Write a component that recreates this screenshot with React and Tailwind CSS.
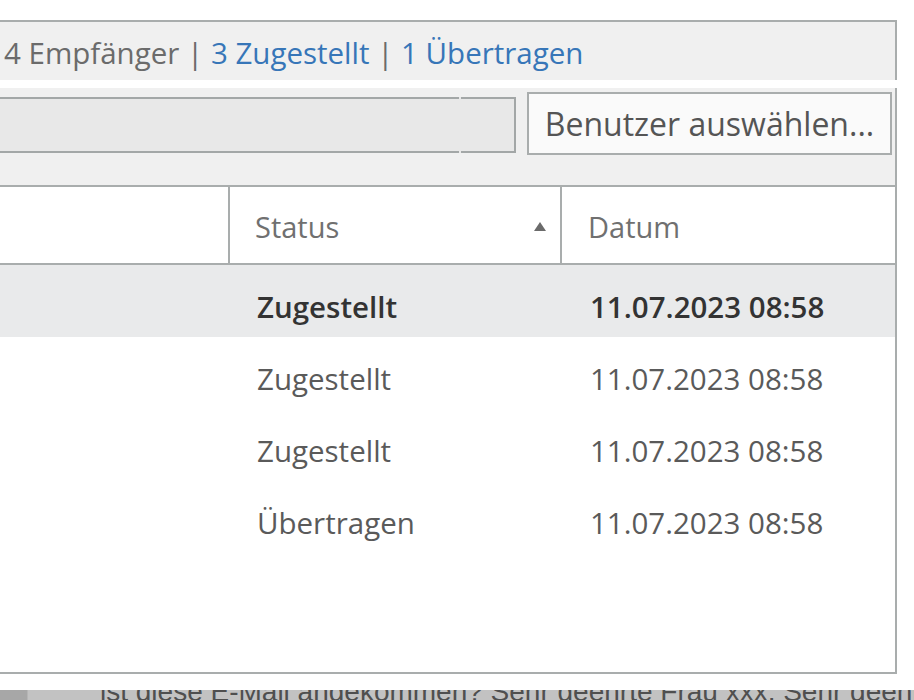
const rows = [
  { status: 'Zugestellt', date: '11.07.2023 08:58', selected: true },
  { status: 'Zugestellt', date: '11.07.2023 08:58' },
  { status: 'Zugestellt', date: '11.07.2023 08:58' },
  { status: 'Übertragen', date: '11.07.2023 08:58' },
]

const SortUp = () => (
  <svg width="12" height="9" viewBox="0 0 12 9" className="flex-none">
    <path d="M6 0 L12 9 L0 9 Z" fill="#6b6b6b" />
  </svg>
)

export default function App() {
  return (
    <div className="w-[914px] h-[700px] bg-white overflow-hidden font-['Open_Sans','Noto_Sans',sans-serif]">
      <div className="h-[20px]" />

      {/* summary */}
      <div className="w-[897px] h-[60px] border-t-2 border-r-2 border-[#a9adad] bg-[#f0f0f0] flex items-center pt-[4px] pl-[4px] text-[29.5px] text-[#6b6b6b] whitespace-nowrap">
        <span>4 Empfänger |&nbsp;</span>
        <span className="text-[#3776b8]">3 Zugestellt</span>
        <span>&nbsp;|&nbsp;</span>
        <span className="text-[#3776b8]">1 Übertragen</span>
      </div>

      <div className="h-[8px]" />

      {/* list box */}
      <div className="w-[897px] h-[586px] border-r-2 border-b-2 border-[#a9adad] flex flex-col">
        {/* filter */}
        <div className="h-[99px] flex-none bg-[#f0f0f0] border-b-2 border-[#a9adad] flex items-start pt-[4px]">
          <div className="flex h-[56px] mt-[5px] ml-[-2px]">
            <div className="w-[461px] bg-[#e8e8e8] border-y-2 border-[#a3a7a7]" />
            <div className="w-[2px] bg-[#e8e8e8]" />
            <div className="w-[55px] bg-[#e8e8e8] border-y-2 border-r-2 border-[#a3a7a7]" />
          </div>
          <button className="ml-[11px] w-[365px] h-[63px] border-2 border-[#a9adad] bg-[#fafafa] text-[32px] text-[#555] flex items-center justify-center whitespace-nowrap">
            Benutzer auswählen...
          </button>
        </div>

        {/* table header */}
        <div className="h-[78px] flex-none flex border-b-2 border-[#a9adad] text-[29px] text-[#707070]">
          <div className="w-[230px] border-r-2 border-[#a9adad]" />
          <div className="w-[332px] border-r-2 border-[#a9adad] flex items-center pt-[3px] pl-[25px] pr-[14px]">
            <span className="flex-1">Status</span>
            <SortUp />
          </div>
          <div className="flex-1 flex items-center pt-[3px] pl-[26px]">Datum</div>
        </div>

        {/* rows */}
        <div className="flex-1 flex flex-col">
          {rows.map((r, i) => (
            <div
              key={i}
              className={
                r.selected
                  ? 'h-[72px] flex items-center pt-[12px] bg-[#e9eaeb] text-[29.5px] font-semibold text-[#333]'
                  : 'h-[72px] flex items-center pt-[12px] text-[29.5px] text-[#5a5a5a]'
              }
            >
              <div className="w-[232px]" />
              <div className="w-[332px] pl-[25px]">{r.status}</div>
              <div className="flex-1 pl-[26px]">{r.date}</div>
            </div>
          ))}
        </div>
      </div>

      <div className="h-[16px]" />

      {/* message preview behind */}
      <div className="h-[10px] flex overflow-hidden bg-[#c2c2c2]">
        <div className="w-[28px] flex-none bg-[#a7a7a7] border-r border-[#b5b5b5]" />
        <div className="pl-[72px] mt-[-12px] leading-none text-[28px] text-[#4f4f4f] whitespace-nowrap font-['Liberation_Sans',Arial,sans-serif]">
          ist diese E-Mail angekommen? Sehr geehrte Frau xxx, Sehr geehrte
        </div>
      </div>
    </div>
  )
}
